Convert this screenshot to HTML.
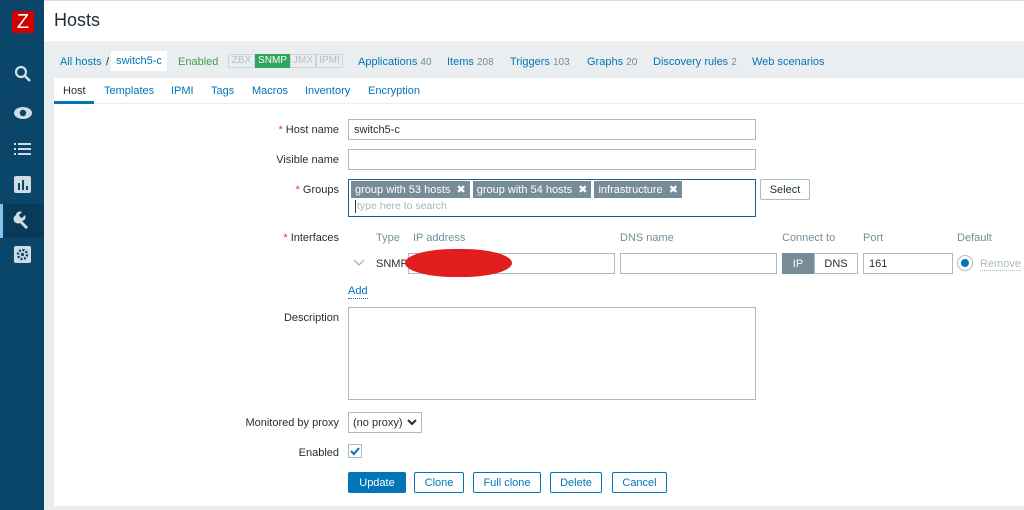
<!DOCTYPE html>
<html><head><style>
*{box-sizing:border-box;margin:0;padding:0}
body{width:1024px;height:510px;overflow:hidden;font-family:"Liberation Sans",sans-serif;font-size:11px;color:#1f2c33;background:#ebeef0;position:relative}
.abs{position:absolute;white-space:nowrap}
#side{left:0;top:0;width:44px;height:510px;background:#0a466a}
#head{left:44px;top:0;width:980px;height:41px;background:#fff}
a,.lnk{color:#0275b8;text-decoration:none}
.inp{position:absolute;height:21px;border:1px solid #acbbc2;background:#fff;padding:4px 5px 2px;font-size:11px;white-space:nowrap}
.lbl{position:absolute;right:685px;text-align:right;white-space:nowrap}
.btn{position:absolute;height:21px;border:1px solid #0275b8;color:#0275b8;background:#fff;text-align:center;line-height:20px;border-radius:2px;font-size:11px}
.tag{display:inline-block;background:#768d99;color:#fff;padding:2px 4px;margin-right:3px;font-size:11px;height:17px;line-height:14px}
.gray{color:#768d99;font-size:10px}
</style></head><body>
<div id="side" class="abs">
 <div class="abs" style="left:12px;top:11px;width:22px;height:22px;background:#d40000;color:#fff;font-size:20px;text-align:center;line-height:22px">Z</div>
 <svg class="abs" style="left:14px;top:65px" width="18" height="18" viewBox="0 0 18 18"><circle cx="7" cy="7" r="5" fill="none" stroke="#cfdce4" stroke-width="2.2"/><path d="M11 11l5 5" stroke="#cfdce4" stroke-width="2.6"/></svg>
 <svg class="abs" style="left:13px;top:106px" width="20" height="14" viewBox="0 0 20 14"><ellipse cx="10" cy="7" rx="9" ry="6" fill="#cfdce4"/><circle cx="10" cy="7" r="3.2" fill="#0a466a"/></svg>
 <svg class="abs" style="left:14px;top:142px" width="18" height="14" viewBox="0 0 18 14"><g fill="#cfdce4"><rect x="0" y="1" width="2" height="2"/><rect x="4" y="1" width="13" height="2"/><rect x="0" y="6" width="2" height="2"/><rect x="4" y="6" width="13" height="2"/><rect x="0" y="11" width="2" height="2"/><rect x="4" y="11" width="13" height="2"/></g></svg>
 <svg class="abs" style="left:14px;top:176px" width="17" height="17" viewBox="0 0 17 17"><rect width="17" height="17" rx="2" fill="#cfdce4"/><g fill="#0a466a"><rect x="4" y="7" width="2" height="7"/><rect x="8" y="4" width="2" height="10"/><rect x="12" y="10" width="2" height="4"/></g></svg>
 <div class="abs" style="left:0;top:204px;width:44px;height:34px;background:#083a59"></div>
 <div class="abs" style="left:0;top:204px;width:3px;height:34px;background:#7fc3ee"></div>
 <svg class="abs" style="left:13px;top:211px" width="18" height="18" viewBox="0 0 18 18"><path d="M3 4a4 4 0 0 1 6-3l-3 3 1 2 2 1 3-3a4 4 0 0 1-3 6l6 6-2 2-6-6a4 4 0 0 1-4-8z" fill="#cfdce4"/></svg>
 <svg class="abs" style="left:14px;top:246px" width="17" height="17" viewBox="0 0 17 17"><rect width="17" height="17" rx="2" fill="#cfdce4"/><circle cx="8.5" cy="8.5" r="4.5" fill="none" stroke="#0a466a" stroke-width="2.5" stroke-dasharray="2 1.5"/><circle cx="8.5" cy="8.5" r="1.6" fill="#0a466a"/></svg>
</div>
<div id="head" class="abs"><div class="abs" style="left:10px;top:10px;font-size:18px;color:#1f2c33">Hosts</div></div>
<div class="abs" style="left:44px;top:0;width:980px;height:1px;background:#d8dde0"></div>

<div class="abs" style="left:60px;top:56px;line-height:12px"><a>All hosts</a></div>
<div class="abs" style="left:106px;top:56px;line-height:12px">/</div>
<div class="abs" style="left:111px;top:51px;width:56px;height:20px;background:#fff;line-height:21px;text-align:center;color:#0275b8">switch5-c</div>
<div class="abs" style="left:178px;top:56px;color:#429e47;line-height:12px">Enabled</div>
<div class="abs" style="left:228px;top:54px;height:14px;font-size:10px;line-height:12px;display:flex">
<span style="border:1px solid #cfd5d8;color:#b6c0c5;padding:0 2px;width:27px;text-align:center">ZBX</span><span style="background:#2fa75a;color:#fff;border:1px solid #2fa75a;width:35px;text-align:center">SNMP</span><span style="border:1px solid #cfd5d8;color:#b6c0c5;width:26px;text-align:center">JMX</span><span style="border:1px solid #cfd5d8;color:#b6c0c5;width:27px;text-align:center">IPMI</span></div>
<div class="abs" style="left:358px;top:56px;line-height:12px"><a>Applications</a> <span class="gray">40</span></div>
<div class="abs" style="left:447px;top:56px;line-height:12px"><a>Items</a> <span class="gray">208</span></div>
<div class="abs" style="left:510px;top:56px;line-height:12px"><a>Triggers</a> <span class="gray">103</span></div>
<div class="abs" style="left:587px;top:56px;line-height:12px"><a>Graphs</a> <span class="gray">20</span></div>
<div class="abs" style="left:653px;top:56px;line-height:12px"><a>Discovery rules</a> <span class="gray">2</span></div>
<div class="abs" style="left:752px;top:56px;line-height:12px"><a>Web scenarios</a></div>

<div class="abs" style="left:54px;top:78px;width:970px;height:428px;background:#fff"></div>
<div class="abs" style="left:54px;top:103px;width:970px;height:1px;background:#ebeef0"></div>
<div class="abs" style="left:54px;top:101px;width:40px;height:3px;background:#0275b8"></div>
<div class="abs" style="left:63px;top:85px">Host</div>
<div class="abs" style="left:104px;top:85px"><a>Templates</a></div>
<div class="abs" style="left:171px;top:85px"><a>IPMI</a></div>
<div class="abs" style="left:211px;top:85px"><a>Tags</a></div>
<div class="abs" style="left:252px;top:85px"><a>Macros</a></div>
<div class="abs" style="left:305px;top:85px"><a>Inventory</a></div>
<div class="abs" style="left:368px;top:85px"><a>Encryption</a></div>

<div class="lbl" style="top:124px"><span style="color:#e33734">*</span> Host name</div>
<div class="inp" style="left:348px;top:119px;width:408px">switch5-c</div>
<div class="lbl" style="top:154px">Visible name</div>
<div class="inp" style="left:348px;top:149px;width:408px"></div>
<div class="lbl" style="top:184px"><span style="color:#e33734">*</span> Groups</div>
<div class="abs" style="left:348px;top:179px;width:408px;height:38px;border:1px solid #1f5c86;padding:1px 2px">
<span class="tag">group with 53 hosts &nbsp;✖</span><span class="tag">group with 54 hosts &nbsp;✖</span><span class="tag">infrastructure &nbsp;✖</span>
<div style="color:#aab5ba;margin-top:2px;padding-left:1px;border-left:1px solid #333;height:13px;line-height:13px;margin-left:4px;font-size:10.5px">type here to search</div></div>
<div class="btn" style="left:760px;top:179px;width:50px;border-color:#acbbc2;color:#1f2c33">Select</div>

<div class="lbl" style="top:232px"><span style="color:#e33734">*</span> Interfaces</div>
<div class="abs" style="left:376px;top:232px;color:#768d99">Type</div>
<div class="abs" style="left:413px;top:232px;color:#768d99">IP address</div>
<div class="abs" style="left:620px;top:232px;color:#768d99">DNS name</div>
<div class="abs" style="left:782px;top:232px;color:#768d99">Connect to</div>
<div class="abs" style="left:863px;top:232px;color:#768d99">Port</div>
<div class="abs" style="left:957px;top:232px;color:#768d99">Default</div>
<svg class="abs" style="left:353px;top:259px" width="12" height="8" viewBox="0 0 12 8"><path d="M1 1l5 5 5-5" fill="none" stroke="#acbbc2" stroke-width="1.5"/></svg>
<div class="abs" style="left:376px;top:258px">SNMP</div>
<div class="inp" style="left:408px;top:253px;width:207px"></div>
<div class="abs" style="left:405px;top:249px;width:107px;height:28px;background:#e11d1d;border-radius:50%/55%"></div>
<div class="inp" style="left:620px;top:253px;width:157px"></div>
<div class="abs" style="left:782px;top:253px;width:32px;height:21px;background:#768d99;color:#fff;text-align:center;line-height:22px">IP</div>
<div class="abs" style="left:814px;top:253px;width:44px;height:21px;border:1px solid #acbbc2;text-align:center;line-height:20px">DNS</div>
<div class="inp" style="left:863px;top:253px;width:90px">161</div>
<div class="abs" style="left:957px;top:255px;width:16px;height:16px;border:1px solid #acbbc2;border-radius:50%;background:#fff"><div style="margin:3px;width:8px;height:8px;border-radius:50%;background:#0275b8"></div></div>
<div class="abs" style="left:980px;top:258px;color:#acbbc2;border-bottom:1px dotted #acbbc2;line-height:12px">Remove</div>
<div class="abs" style="left:348px;top:285px;color:#0275b8;border-bottom:1px dotted #0275b8;line-height:13px">Add</div>

<div class="lbl" style="top:312px">Description</div>
<div class="inp" style="left:348px;top:307px;width:408px;height:93px"></div>
<div class="lbl" style="top:417px">Monitored by proxy</div>
<div class="inp" style="left:348px;top:412px;width:74px;padding:4px 4px 2px">(no proxy)</div>
<svg class="abs" style="left:407px;top:419px" width="10" height="7" viewBox="0 0 10 7"><path d="M1 1l4 4 4-4" fill="none" stroke="#1f2c33" stroke-width="2"/></svg>
<div class="lbl" style="top:447px">Enabled</div>
<div class="abs" style="left:348px;top:444px;width:14px;height:14px;border:1px solid #acbbc2"><svg width="12" height="12" viewBox="0 0 12 12"><path d="M2 6l3 3 5-6" fill="none" stroke="#0275b8" stroke-width="2"/></svg></div>
<div class="btn" style="left:348px;top:472px;width:58px;background:#0275b8;color:#fff">Update</div>
<div class="btn" style="left:414px;top:472px;width:50px">Clone</div>
<div class="btn" style="left:473px;top:472px;width:68px">Full clone</div>
<div class="btn" style="left:550px;top:472px;width:52px">Delete</div>
<div class="btn" style="left:612px;top:472px;width:55px">Cancel</div>
</body></html>
